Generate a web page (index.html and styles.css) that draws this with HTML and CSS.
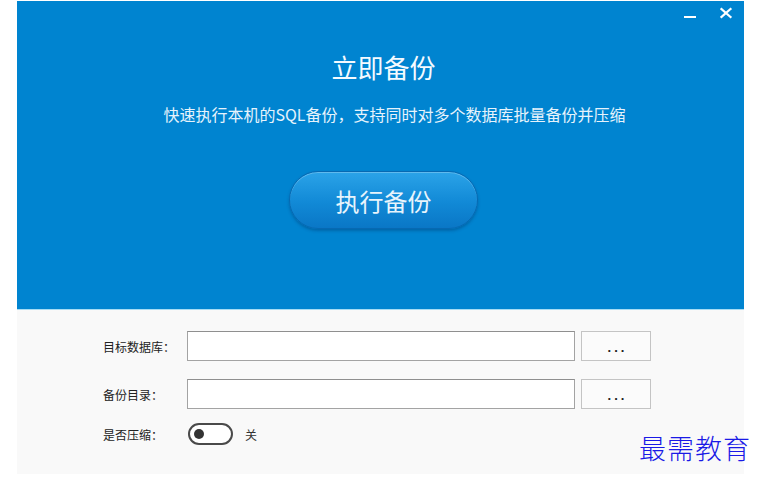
FILE: index.html
```html
<!DOCTYPE html>
<html lang="zh-CN">
<head>
    <meta charset="UTF-8">
    <title>立即备份</title>
    <link rel="stylesheet" href="styles.css">
</head>
<body>
    <div class="window">
        <div class="hero">
            <div class="titlebar">
                <span class="win-btn">
                    <svg width="14" height="12" viewBox="0 0 14 12"><rect x="1" y="9" width="12" height="2" fill="#fff"/></svg>
                </span>
                <span class="win-btn">
                    <svg width="12" height="12" viewBox="0 0 12 12"><path d="M1.5 2 L10.5 10 M10.5 2 L1.5 10" stroke="#fff" stroke-width="2.2" stroke-linecap="square"/></svg>
                </span>
            </div>
            <h1 class="title">立即备份</h1>
            <p class="subtitle">快速执行本机的SQL备份，支持同时对多个数据库批量备份并压缩</p>
            <button class="run-btn">执行备份</button>
        </div>
        <div class="settings">
            <div class="row">
                <label class="label">目标数据库：</label>
                <input class="field" type="text">
                <button class="browse">...</button>
            </div>
            <div class="row">
                <label class="label">备份目录：</label>
                <input class="field" type="text">
                <button class="browse">...</button>
            </div>
            <div class="row toggle-row">
                <label class="label">是否压缩：</label>
                <span class="switch"><span class="knob"></span></span>
                <span class="switch-text">关</span>
            </div>
        </div>
    </div>
    <div class="watermark">最需教育</div>
</body>
</html>
```

FILE: styles.css
```css
body {
    margin: 0;
    background: #ffffff;
    font-family: "Noto Sans CJK SC", "Noto Sans", sans-serif;
    color: #333;
    position: relative;
    width: 760px;
    height: 481px;
    overflow: hidden;
}
.window {
    margin-left: 17px;
    margin-top: 1px;
    width: 727px;
}
.hero {
    background: #0084d0;
    height: 308px;
    border-bottom: 1px solid #a6dcf4;
    display: flex;
    flex-direction: column;
    align-items: center;
    padding-left: 6px;
    box-sizing: content-box;
    width: 721px;
}
.titlebar {
    align-self: stretch;
    display: flex;
    justify-content: flex-end;
    gap: 20px;
    padding: 4px 10px 0 0;
    height: 26px;
}
.win-btn {
    display: flex;
    width: 16px;
    height: 16px;
    align-items: center;
    justify-content: center;
}
.title {
    margin: 21px 0 0;
    font-size: 26px;
    line-height: 30px;
    font-weight: normal;
    color: #f4faff;
}
.subtitle {
    margin: 22px 0 0 22px;
    font-size: 16px;
    line-height: 20px;
    color: #e6f3fc;
}
.run-btn {
    margin-top: 47px;
    width: 189px;
    height: 58px;
    border-radius: 29px;
    border: 1px solid #0769b2;
    background: linear-gradient(#2ba3e8, #1189d6 55%, #0a77c6);
    box-shadow: 0 2px 3px rgba(0, 50, 100, 0.35), inset 0 1px 0 rgba(255, 255, 255, 0.25);
    color: #e8f4fc;
    font-family: "Noto Sans CJK SC", sans-serif;
    font-size: 24px;
    padding: 0;
}
.settings {
    background: #f9f9f9;
    height: 143px;
    padding: 21px 0 0 86px;
}
.row {
    display: flex;
    align-items: center;
    height: 30px;
    margin-bottom: 18px;
}
.toggle-row {
    margin-top: -4px;
    height: 22px;
}
.label {
    width: 84px;
    font-size: 12px;
    color: #222;
}
.field {
    box-sizing: border-box;
    width: 388px;
    height: 30px;
    border: 1px solid #a3a3a3;
    border-top-color: #8f8f8f;
    background: #fff;
    margin: 0;
}
.browse {
    box-sizing: border-box;
    margin-left: 6px;
    width: 70px;
    height: 30px;
    border: 1px solid #c4c4c4;
    background: #fbfbfb;
    font-family: "Liberation Sans", sans-serif;
    font-size: 13px;
    font-weight: bold;
    letter-spacing: 3px;
    color: #222;
    padding: 3px 0 0 3px;
}
.switch {
    box-sizing: border-box;
    margin-left: 1px;
    width: 45px;
    height: 22px;
    border: 2px solid #4a4a4a;
    border-radius: 11px;
    background: #fff;
    display: flex;
    align-items: center;
    padding-left: 4px;
}
.knob {
    width: 10px;
    height: 10px;
    border-radius: 50%;
    background: #333;
}
.switch-text {
    margin-left: 12px;
    font-size: 12px;
    color: #333;
}
.watermark {
    position: absolute;
    left: 639px;
    top: 432px;
    font-family: "Noto Sans CJK SC", serif;
    font-size: 27px;
    font-weight: 300;
    line-height: 32px;
    letter-spacing: 1px;
    color: #1a1ae6;
}
```
